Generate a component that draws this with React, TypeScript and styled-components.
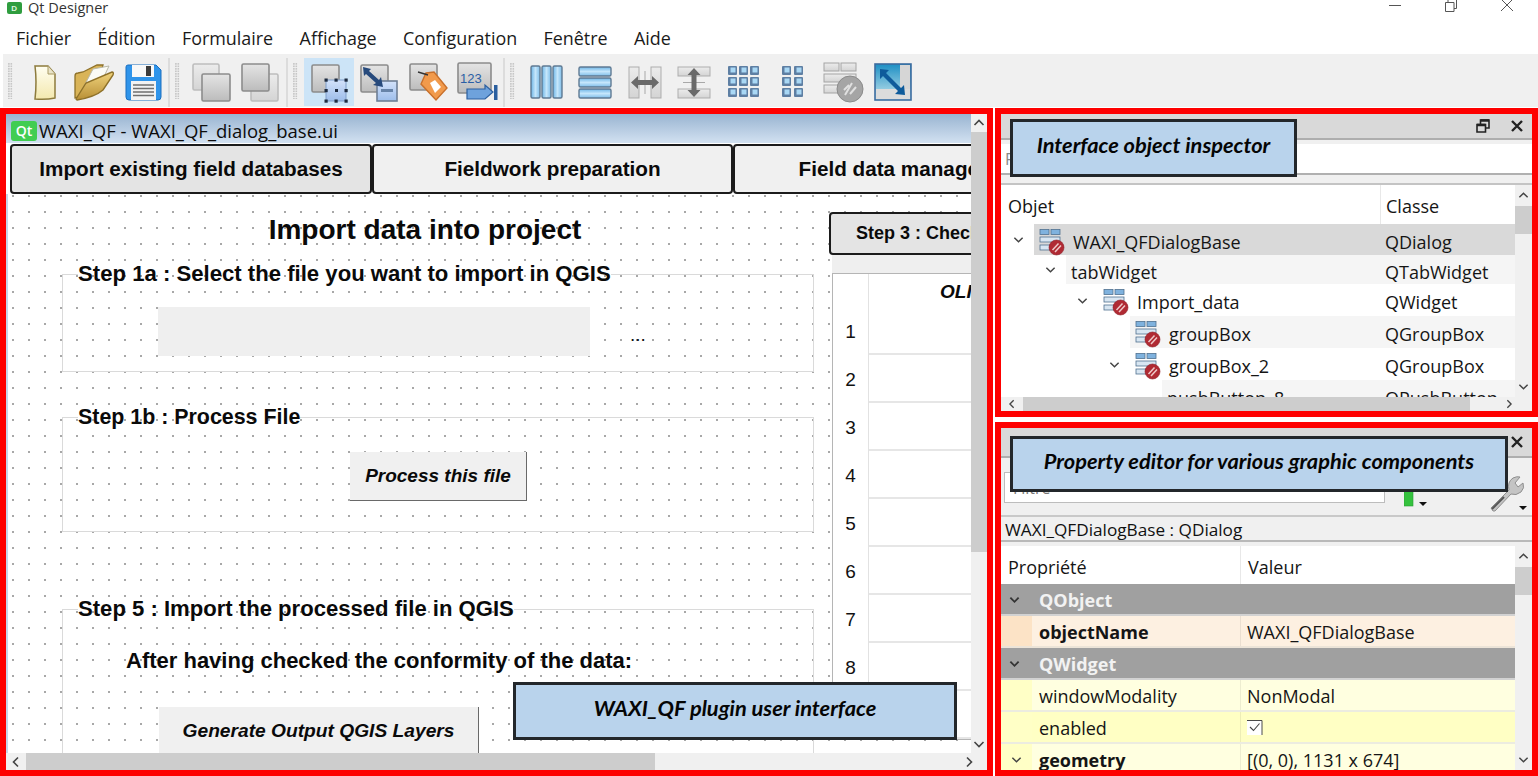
// App.tsx
import React from 'react'
import styled, { createGlobalStyle } from 'styled-components'

const UI_FONT = '"Open Sans", "Noto Sans", sans-serif'
const FORM_FONT = '"Liberation Sans", Arial, sans-serif'

const GlobalStyle = createGlobalStyle`
  html, body { margin:0; padding:0; background:#fff; overflow:hidden; }
  body { font-family:${UI_FONT}; color:#111; }
  * { box-sizing:border-box; }
`

const Page = styled.div`
  width:1538px;
  height:776px;
  display:flex;
  flex-direction:column;
  overflow:hidden;
  background:#fff;
`

/* ---------- window chrome ---------- */

const TitleBar = styled.div`
  height:18px;
  display:flex;
  align-items:center;
  padding:0 0 3px 7px;
  font-size:14.5px;
  line-height:15px;
  color:#333;
`

const TitleText = styled.span`
  margin-left:6px;
`

const WindowButtons = styled.div`
  margin-left:auto;
  height:18px;
  display:flex;
  padding-right:24px;
  gap:42px;
  align-items:flex-start;
`

const MenuBar = styled.div`
  height:36px;
  display:flex;
  align-items:center;
  gap:26.4px;
  padding:3px 0 0 16px;
  font-size:17.9px;
  color:#1a1a1a;
`

const Toolbar = styled.div`
  height:53px;
  margin-left:3px;
  background:#f0f0f0;
  display:flex;
  padding-top:4px;
`

const ToolGroup = styled.div<{ $width: number }>`
  width:${p => p.$width}px;
  display:flex;
  height:49px;
  position:relative;
  border-right:2px solid #dcdcdc;
`

const Grip = styled.div`
  width:5px;
  height:36px;
  margin:5px 6px 0 5px;
  background-image:radial-gradient(circle at 1px 1px, #c6c6c6 .8px, transparent 1px);
  background-size:2.5px 2.5px;
`

const ToolSlot = styled.div<{ $active?: boolean }>`
  width:49.5px;
  height:48px;
  display:flex;
  align-items:center;
  justify-content:center;
  background:${p => (p.$active ? '#cce4f7' : 'transparent')};
`

/* ---------- red framed panels ---------- */

const Panels = styled.div`
  margin-top:1px;
  height:668px;
  display:flex;
  gap:2px;
`

const RightColumn = styled.div`
  width:543px;
  display:flex;
  flex-direction:column;
  gap:5px;
`

const RedFrame = styled.div<{ $width?: number; $height: number }>`
  position:relative;
  width:${p => (p.$width ? `${p.$width}px` : '100%')};
  height:${p => p.$height}px;
  border:6px solid #fe0000;
  display:flex;
  flex-direction:column;
  overflow:hidden;
  background:#f0f0f0;
`

const Callout = styled.div<{ $left: number; $top: number; $width: number; $height: number }>`
  position:absolute;
  left:${p => p.$left}px;
  top:${p => p.$top}px;
  width:${p => p.$width}px;
  height:${p => p.$height}px;
  border:3px solid #23272b;
  background:#b9d3ec;
  display:flex;
  align-items:center;
  justify-content:center;
  padding-bottom:7px;
  font-family:Lato, "Open Sans", sans-serif;
  font-weight:700;
  font-style:italic;
  font-size:21.8px;
  color:#050505;
  z-index:5;
`

/* ---------- scrollbars ---------- */

const VScroll = styled.div<{ $width?: number }>`
  width:${p => p.$width ?? 17}px;
  flex-shrink:0;
  background:#f0f0f0;
  display:flex;
  flex-direction:column;
  align-items:center;
`

const HScroll = styled.div<{ $height?: number }>`
  height:${p => p.$height ?? 17}px;
  flex-shrink:0;
  background:#f0f0f0;
  display:flex;
  align-items:center;
`

const ArrowCell = styled.div<{ $length: number; $vertical?: boolean }>`
  flex-shrink:0;
  display:flex;
  align-items:center;
  justify-content:center;
  ${p => (p.$vertical ? `height:${p.$length}px;width:100%;` : `width:${p.$length}px;height:100%;`)}
`

const VThumb = styled.div<{ $length: number }>`
  width:100%;
  height:${p => p.$length}px;
  background:#cdcdcd;
  flex-shrink:0;
`

const HThumb = styled.div<{ $length: number }>`
  height:100%;
  width:${p => p.$length}px;
  background:#cdcdcd;
  flex-shrink:0;
`

const ScrollSpacer = styled.div`
  flex:1;
`

/* ---------- designer form ---------- */

const DesignerTop = styled.div`
  flex:1;
  min-height:0;
  display:flex;
`

const FormWindow = styled.div`
  flex:1;
  min-width:0;
  display:flex;
  flex-direction:column;
  background:#fff;
`

const FormTitle = styled.div`
  height:29px;
  flex-shrink:0;
  background:linear-gradient(#99b4d1, #d2e1f1);
  display:flex;
  align-items:center;
  padding:4px 0 0 5px;
  font-size:18.5px;
  color:#0c0c0c;
`

const QtBadge = styled.span`
  width:26px;
  height:20px;
  border-radius:3px;
  background:#41cd52;
  color:#fff;
  font-size:14px;
  font-weight:600;
  display:flex;
  align-items:center;
  justify-content:center;
  margin-right:2px;
`

const TabRow = styled.div`
  height:51px;
  flex-shrink:0;
  padding-left:4px;
  display:flex;
  overflow:hidden;
  background:#fff;
`

const Tab = styled.div<{ $selected?: boolean; $width: number }>`
  width:${p => p.$width}px;
  flex-shrink:0;
  height:50px;
  margin-top:1px;
  border:2px solid #1b1b1b;
  border-radius:4px;
  background:${p => (p.$selected ? '#e4e4e4' : '#f0f0f0')};
  display:flex;
  align-items:center;
  justify-content:center;
  font-family:${FORM_FONT};
  font-weight:700;
  font-size:20.7px;
  color:#0a0a0a;
  white-space:nowrap;
  overflow:hidden;
`

const Canvas = styled.div`
  flex:1;
  min-height:0;
  display:flex;
  overflow:hidden;
  border-left:2px solid #c6d7ea;
  background-color:#fff;
  background-image:radial-gradient(circle at 1px 1px, #a8a8a8 .8px, transparent 1px);
  background-size:16px 16px;
  background-position:4px 1px;
  font-family:${FORM_FONT};
`

const FormColumn = styled.div`
  width:752px;
  margin-left:54px;
  flex-shrink:0;
  display:flex;
  flex-direction:column;
`

const FormHeading = styled.h1`
  margin:21px 26px 15px 0;
  height:30px;
  line-height:30px;
  text-align:center;
  font-size:28px;
  font-weight:700;
  color:#0a0a0a;
`

const GroupBox = styled.fieldset<{ $height: number; $gapAfter: number }>`
  margin:0 0 ${p => p.$gapAfter}px;
  padding:0;
  min-width:0;
  flex-shrink:0;
  height:${p => p.$height}px;
  border:1px solid #dadada;
`

const GroupTitle = styled.legend<{ $size: number }>`
  margin-left:15px;
  padding:0;
  height:28px;
  line-height:28px;
  font-size:${p => p.$size}px;
  font-weight:700;
  color:#0a0a0a;
  white-space:nowrap;
`

const FileRow = styled.div`
  display:flex;
  margin:19px 0 0 95px;
`

const FileField = styled.div`
  width:432px;
  height:49px;
  background:#efefef;
`

const BrowseDots = styled.span`
  margin-left:40px;
  font-size:19px;
  line-height:49px;
  padding-top:3px;
`

const FormButton = styled.div<{ $left: number; $top: number; $width: number; $height: number; $size: number }>`
  width:${p => p.$width}px;
  height:${p => p.$height}px;
  margin:${p => p.$top}px 0 0 ${p => p.$left}px;
  background:#f0f0f0;
  border-right:1px solid #696969;
  border-bottom:1px solid #696969;
  display:flex;
  align-items:center;
  justify-content:center;
  font-weight:700;
  font-style:italic;
  font-size:${p => p.$size}px;
  color:#0a0a0a;
`

const GroupText = styled.div`
  margin:24px 0 0 63px;
  height:28px;
  line-height:28px;
  font-size:22px;
  font-weight:700;
  color:#0a0a0a;
  white-space:nowrap;
`

const CheckColumn = styled.div`
  width:320px;
  margin-left:15px;
  flex-shrink:0;
  display:flex;
  flex-direction:column;
`

const StepButton = styled.div`
  margin-top:18px;
  height:43px;
  flex-shrink:0;
  border:2px solid #1b1b1b;
  border-radius:4px;
  background:#e4e4e4;
  display:flex;
  align-items:center;
  padding-left:25px;
  font-size:18px;
  font-weight:700;
  color:#0a0a0a;
  white-space:nowrap;
`

const TableGap = styled.div`
  margin-left:3px;
  height:18px;
  flex-shrink:0;
  background:#efefef;
`

const CheckTable = styled.div`
  margin-left:3px;
  flex-shrink:0;
  background:#fff;
  border:1px solid #b5b5b5;
  display:grid;
  grid-template-columns:36px 1fr;
  grid-template-rows:33px;
  grid-auto-rows:48px;
`

const CornerCell = styled.div`
  border-right:1px solid #e2e2e2;
`

const ColumnHead = styled.div`
  padding-left:71px;
  line-height:36px;
  font-size:19px;
  font-weight:700;
  font-style:italic;
  color:#0a0a0a;
`

const RowNumber = styled.div`
  border-right:1px solid #e2e2e2;
  display:flex;
  align-items:center;
  justify-content:center;
  padding-top:1px;
  font-size:19px;
  color:#111;
`

const RowCell = styled.div`
  border-bottom:2px solid #e6e6e6;
`

/* ---------- docks ---------- */

const DockTitle = styled.div<{ $height: number }>`
  height:${p => p.$height}px;
  flex-shrink:0;
  background:#d9d9d9;
  border-bottom:2px solid #aeaeae;
  display:flex;
  align-items:center;
  justify-content:flex-end;
  padding-right:8px;
  gap:20px;
`

const FilterStrip = styled.div`
  height:45px;
  flex-shrink:0;
  padding-top:4px;
  border-bottom:2px solid #c4c4c4;
`

const FilterInput = styled.div`
  height:31px;
  background:#fff;
  border-bottom:2px solid #b0b0b0;
  padding-left:4px;
  font-size:16px;
  color:#888;
  line-height:30px;
`

const TreeArea = styled.div`
  flex:1;
  min-height:0;
  display:flex;
  background:#fff;
`

const TreeBody = styled.div`
  flex:1;
  min-width:0;
  overflow:hidden;
  font-size:18px;
  color:#151515;
`

const TreeHead = styled.div`
  height:39px;
  display:grid;
  grid-template-columns:380px 1fr;
  align-items:center;
`

const HeadCell = styled.div<{ $divider?: boolean; $pad: number }>`
  height:100%;
  display:flex;
  align-items:center;
  padding:3px 0 0 ${p => p.$pad}px;
  ${p => (p.$divider ? 'border-right:1px solid #e8e8e8;' : '')}
`

const TreeRow = styled.div<{ $height: number }>`
  height:${p => p.$height}px;
  display:flex;
`

const Branch = styled.div<{ $width: number }>`
  width:${p => p.$width}px;
  flex-shrink:0;
  display:flex;
  align-items:center;
  justify-content:flex-end;
  padding-right:10px;
`

const TreeCells = styled.div<{ $tone: 'plain' | 'alt' | 'selected' }>`
  flex:1;
  display:flex;
  align-items:center;
  padding-top:4px;
  background:${p => (p.$tone === 'selected' ? '#d9d9d9' : p.$tone === 'alt' ? '#f5f5f5' : '#fff')};
`

const TreeName = styled.div<{ $pad: number; $width: number }>`
  width:${p => p.$width}px;
  flex-shrink:0;
  padding-left:${p => p.$pad}px;
  display:flex;
  align-items:center;
  gap:8px;
  white-space:nowrap;
`

const ClassName = styled.div`
  padding-left:4px;
  white-space:nowrap;
`

const PropTools = styled.div`
  height:59px;
  flex-shrink:0;
  display:flex;
  padding:14px 0 0 3px;
  border-bottom:2px solid #c9c9c9;
`

const PropFilter = styled.div`
  width:381px;
  height:31px;
  background:#fff;
  border:1px solid #bdbdbd;
  padding-left:8px;
  font-size:16px;
  line-height:31px;
  color:#777;
`

const ToolIcons = styled.div`
  flex:1;
  display:flex;
  justify-content:space-between;
  padding:19px 5px 0 19px;
`

const ObjectLabel = styled.div`
  height:25px;
  flex-shrink:0;
  padding-left:4px;
  line-height:26px;
  font-size:17.2px;
  color:#111;
  border-bottom:2px solid #b9b9b9;
  white-space:nowrap;
`

const PropArea = styled.div`
  flex:1;
  min-height:0;
  display:flex;
  margin-top:4px;
  background:#fff;
`

const PropBody = styled.div`
  flex:1;
  min-width:0;
  overflow:hidden;
  font-size:18px;
  color:#151515;
`

const PropHead = styled.div`
  height:38px;
  display:grid;
  grid-template-columns:240px 1fr;
  align-items:center;
`

const SectionRow = styled.div`
  height:32px;
  background:#a0a0a0;
  border-bottom:2px solid #d2d2d2;
  display:flex;
  align-items:center;
  font-weight:700;
  color:#f2f2f2;
`

const SectionChevron = styled.div`
  width:31px;
  display:flex;
  justify-content:center;
  padding-right:4px;
`

const SectionName = styled.span`
  padding:2px 0 0 7px;
`

const PropRow = styled.div<{ $bg: string; $rule: string }>`
  height:32px;
  display:grid;
  grid-template-columns:31px 209px 1fr;
  background:${p => p.$bg};
  border-bottom:2px solid ${p => p.$rule};
`

const PropStripe = styled.div<{ $bg: string }>`
  background:${p => p.$bg};
  display:flex;
  align-items:center;
  justify-content:center;
`

const PropName = styled.div<{ $bold?: boolean }>`
  padding:2px 0 0 7px;
  display:flex;
  align-items:center;
  font-weight:${p => (p.$bold ? 700 : 400)};
  border-right:1px solid rgba(0,0,0,.07);
`

const PropValue = styled.div`
  padding:2px 0 0 6px;
  display:flex;
  align-items:center;
  white-space:nowrap;
`

/* ---------- icons ---------- */

const Chevron = ({ dir = 'down', color = '#444', size = 11, width = 1.6 }: { dir?: 'up' | 'down' | 'left' | 'right'; color?: string; size?: number; width?: number }) => {
  const rot = { down: 0, up: 180, left: 90, right: -90 }[dir]
  return (
    <svg width={size} height={size} viewBox="0 0 12 12" style={{ transform: `rotate(${rot}deg)` }}>
      <path d="M1.5 4 L6 8.5 L10.5 4" fill="none" stroke={color} strokeWidth={width} />
    </svg>
  )
}

const Gradients = () => (
  <svg width="0" height="0" style={{ position: 'absolute' }}>
    <defs>
      <linearGradient id="gPaper" x1="0" y1="0" x2="0" y2="1"><stop offset="0" stopColor="#fffef0" /><stop offset="1" stopColor="#f3e8ae" /></linearGradient>
      <linearGradient id="gFolder" x1="0" y1="0" x2="0" y2="1"><stop offset="0" stopColor="#f0d37c" /><stop offset="1" stopColor="#b88f35" /></linearGradient>
      <linearGradient id="gGrey" x1="0" y1="0" x2="0" y2="1"><stop offset="0" stopColor="#e4e4e4" /><stop offset="1" stopColor="#bcbcbc" /></linearGradient>
      <linearGradient id="gGreyLight" x1="0" y1="0" x2="0" y2="1"><stop offset="0" stopColor="#ececec" /><stop offset="1" stopColor="#d4d4d4" /></linearGradient>
      <linearGradient id="gSky" x1="0" y1="0" x2="1" y2="0"><stop offset="0" stopColor="#6db5e6" /><stop offset=".5" stopColor="#c5e6fb" /><stop offset="1" stopColor="#7dbde9" /></linearGradient>
      <linearGradient id="gSkyV" x1="0" y1="0" x2="0" y2="1"><stop offset="0" stopColor="#6db5e6" /><stop offset=".5" stopColor="#c5e6fb" /><stop offset="1" stopColor="#7dbde9" /></linearGradient>
      <linearGradient id="gPale" x1="0" y1="0" x2="0" y2="1"><stop offset="0" stopColor="#d3e2fa" /><stop offset="1" stopColor="#9dbdea" /></linearGradient>
      <linearGradient id="gTeal" x1="0" y1="0" x2="0" y2="1"><stop offset="0" stopColor="#1d8fc4" /><stop offset="1" stopColor="#c6e6ee" /></linearGradient>
    </defs>
  </svg>
)

const Tool = ({ children }: { children: React.ReactNode }) => (
  <svg width="44" height="44" viewBox="0 0 44 44">{children}</svg>
)

const GreySquare = ({ x, y, s, h, light }: { x: number; y: number; s: number; h?: number; light?: boolean }) => (
  <rect x={x} y={y} width={s} height={h ?? s} rx="1.5" fill={light ? 'url(#gGreyLight)' : 'url(#gGrey)'} stroke={light ? '#bdbdbd' : '#8c8c8c'} strokeWidth="1.6" />
)

const NewIcon = () => (
  <Tool>
    <path d="M13 6 H26 L33 14 V38 Q24 40 13 39 Q15 22 13 6 Z" fill="url(#gPaper)" stroke="#8d7b3d" strokeWidth="1.5" />
    <path d="M26 6 V14 H33" fill="#e9e4c8" stroke="#a99a63" strokeWidth="1" />
  </Tool>
)

const OpenIcon = () => (
  <Tool>
    <path d="M4 38 L4 16 Q4 13 7 13 L12 12 L26 5 L32 5 L30 13 L12 36 Z" fill="#d9b458" stroke="#8e7129" strokeWidth="1.3" />
    <path d="M11 30 L22 9 L38 6 L29 25 Z" fill="#fbfbf6" stroke="#b9b9a8" strokeWidth="1" />
    <path d="M5 39 L15 23 L41 12 Q43 12 42 15 L32 30 Q24 37 6 40 Z" fill="url(#gFolder)" stroke="#8e7129" strokeWidth="1.4" />
  </Tool>
)

const SaveIcon = () => (
  <Tool>
    <path d="M7 5 H35 L40 10 V37 Q40 40 37 40 H8 Q5 40 5 37 V7 Q5 5 7 5 Z" fill="#2f94ea" stroke="#1b6fbf" strokeWidth="1" />
    <rect x="11" y="5" width="22" height="12" fill="#f8f8f8" />
    <rect x="25" y="6" width="5" height="10" fill="#3b3b3b" />
    <rect x="10" y="21" width="25" height="19" fill="#f2f2f2" />
    <path d="M12 25 H33 M12 28.5 H33 M12 32 H33 M12 35.5 H33" stroke="#6f6f6f" strokeWidth="1.6" />
  </Tool>
)

const CopyIcon = () => (
  <Tool>
    <GreySquare x={4} y={4} s={26} light />
    <GreySquare x={13} y={14} s={28} h={27} />
  </Tool>
)

const BackIcon = () => (
  <Tool>
    <GreySquare x={13} y={14} s={27} light />
    <GreySquare x={4} y={4} s={27} />
  </Tool>
)

const WidgetModeIcon = () => (
  <Tool>
    <GreySquare x={5} y={5} s={27} />
    <rect x="19" y="20" width="20" height="21" fill="url(#gPale)" stroke="#7f9dc9" />
    <rect x="28" y="29" width="3" height="3" fill="#1e2c40" />
    {[[17.5, 18.5], [27.5, 18.5], [37.5, 18.5], [17.5, 29], [37.5, 29], [17.5, 39.5], [27.5, 39.5], [37.5, 39.5]].map(([x, y]) => (
      <rect key={`${x}-${y}`} x={x} y={y} width="3.2" height="3.2" fill="#1e2c40" />
    ))}
  </Tool>
)

const SignalIcon = () => (
  <Tool>
    <GreySquare x={5} y={5} s={27} />
    <rect x="21" y="21" width="20" height="20" fill="url(#gPale)" stroke="#6f7f95" strokeWidth="1.6" />
    <rect x="25" y="29" width="12" height="3" fill="#6783a8" />
    <path d="M7 7 L15 9 L13 11 L23 20 L25 17 L27 27 L17 25 L20 23 L10 14 L8 16 Z" fill="#274a7c" />
  </Tool>
)

const BuddyIcon = () => (
  <Tool>
    <GreySquare x={4} y={4} s={27} h={26} />
    <path d="M20 13 L28 12 L41 28 L30 40 L15 24 Z" fill="#f19a4c" stroke="#c8702c" strokeWidth="1.4" />
    <path d="M24 23 L29 20 L35 27 L29 33 Z" fill="#fff" />
    <path d="M12 12 L22 15" stroke="#333" strokeWidth="1.4" />
  </Tool>
)

const TabOrderIcon = () => (
  <Tool>
    <GreySquare x={3} y={3} s={33} h={30} />
    <text x="5" y="23" fontFamily={FORM_FONT} fontSize="13" fill="#2a5ea5">123</text>
    <path d="M12 29 H30 V25 L38 32 L30 39 H12 Z" fill="#6ea2dc" stroke="#2b5f9f" strokeWidth="1.2" />
    <rect x="39" y="25" width="3.5" height="15" fill="#2b5f9f" />
  </Tool>
)

const BarV = ({ x }: { x: number }) => (
  <rect x={x} y="6" width="9" height="32" rx="1.5" fill="url(#gSky)" stroke="#5f7a93" strokeWidth="1.4" />
)

const BarH = ({ y }: { y: number }) => (
  <rect x="6" y={y} width="32" height="9" rx="1.5" fill="url(#gSkyV)" stroke="#5f7a93" strokeWidth="1.4" />
)

const LayoutHIcon = () => (
  <Tool><BarV x={7} /><BarV x={18} /><BarV x={29} /></Tool>
)

const LayoutVIcon = () => (
  <Tool><BarH y={7} /><BarH y={18} /><BarH y={29} /></Tool>
)

const SplitHIcon = () => (
  <Tool>
    <rect x="6" y="7" width="10" height="31" fill="url(#gGreyLight)" stroke="#adadad" />
    <rect x="28" y="7" width="10" height="31" fill="url(#gGreyLight)" stroke="#adadad" />
    <path d="M22 11 V34" stroke="#a8a8a8" />
    <path d="M8 22.5 L15 16 V20 H29 V16 L36 22.5 L29 29 V25 H15 V29 Z" fill="#6a6a6a" />
  </Tool>
)

const SplitVIcon = () => (
  <Tool>
    <rect x="6" y="7" width="32" height="9" fill="url(#gGreyLight)" stroke="#adadad" />
    <rect x="6" y="29" width="32" height="9" fill="url(#gGreyLight)" stroke="#adadad" />
    <path d="M11 22.5 H33" stroke="#a8a8a8" />
    <path d="M22 8 L28.5 15 H24.5 V30 H28.5 L22 37 L15.5 30 H19.5 V15 H15.5 Z" fill="#6a6a6a" />
  </Tool>
)

const GridCells = ({ xs, ys }: { xs: number[]; ys: number[] }) => (
  <Tool>
    {xs.map(x => ys.map(y => (
      <g key={`${x}-${y}`}>
        <rect x={x} y={y} width="9" height="9" rx="1" fill="#5e7fa3" />
        <rect x={x + 2.5} y={y + 1.5} width="5" height="5" fill="#a9d8f5" />
      </g>
    )))}
  </Tool>
)

const BreakIcon = () => (
  <Tool>
    <rect x="3" y="3" width="15" height="8" fill="url(#gGreyLight)" stroke="#a4a4a4" />
    <rect x="20" y="3" width="15" height="8" fill="url(#gGreyLight)" stroke="#a4a4a4" />
    <rect x="3" y="14" width="32" height="8" fill="url(#gGreyLight)" stroke="#a4a4a4" />
    <rect x="3" y="25" width="15" height="8" fill="url(#gGreyLight)" stroke="#a4a4a4" />
    <circle cx="29" cy="29" r="13" fill="#a5a5a5" stroke="#8b8b8b" />
    <path d="M23 30 L28 25 M29 34 L35 27 M31 23 L24 35" stroke="#e0e0e0" strokeWidth="2" fill="none" />
  </Tool>
)

const AdjustIcon = () => (
  <Tool>
    <rect x="5" y="4" width="36" height="36" fill="url(#gTeal)" stroke="#3d6c9f" strokeWidth="1.6" />
    <rect x="30" y="5" width="10" height="34" fill="#d6d6d6" />
    <rect x="6" y="29" width="34" height="10" fill="#dcdcdc" />
    <path d="M10 9 L19 10 L16 13 L31 28 L34 25 L35 35 L25 34 L28 31 L13 16 L10 19 Z" fill="#0e5b9b" />
  </Tool>
)

const WidgetTreeIcon = ({ size = 28 }: { size?: number }) => (
  <svg width={size} height={size} viewBox="0 0 28 28">
    <rect x="3" y="1.5" width="9" height="5" fill="#7fb2de" stroke="#50708f" strokeWidth=".8" />
    <rect x="14" y="1.5" width="9" height="5" fill="#7fb2de" stroke="#50708f" strokeWidth=".8" />
    <rect x="3" y="9" width="20" height="5" fill="#d8e6f2" stroke="#50708f" strokeWidth=".8" />
    <rect x="3" y="17" width="10" height="5" fill="#d8e6f2" stroke="#50708f" strokeWidth=".8" />
    <circle cx="19.5" cy="19.5" r="7.5" fill="#b02a33" stroke="#8e2028" strokeWidth=".6" />
    <path d="M15.5 22 L21.5 15.5 M18 24 L24 17.5" stroke="#eec8c8" strokeWidth="1.5" />
  </svg>
)

const DesignerLogo = () => (
  <svg width="15" height="12" viewBox="0 0 15 12">
    <rect width="15" height="12" rx="2" fill="#2f9d3f" />
    <text x="4.2" y="9.3" fontSize="8" fontWeight="700" fontFamily={FORM_FONT} fill="#dff5df">D</text>
  </svg>
)

const MinimizeGlyph = () => (
  <svg width="14" height="14" viewBox="0 0 14 14"><path d="M1 6.5 H13" stroke="#555" strokeWidth="1" /></svg>
)

const RestoreGlyph = () => (
  <svg width="14" height="14" viewBox="0 0 14 14" fill="none" stroke="#555" strokeWidth="1">
    <path d="M1.5 3.5 H10 V12.5 H1.5 Z M4 3.5 V.5 H12.5 V9.5 H10" />
  </svg>
)

const CloseGlyph = () => (
  <svg width="14" height="14" viewBox="0 0 14 14"><path d="M1 0 L13 12 M13 0 L1 12" stroke="#555" strokeWidth="1" /></svg>
)

const DockFloat = () => (
  <svg width="14" height="14" viewBox="0 0 14 14" fill="none" stroke="#222" strokeWidth="1.6">
    <path d="M1 5.5 H9.5 V13 H1 Z M4.5 5 V1 H13 V9 H10" />
    <path d="M1 6 H9.5 M4.5 1.5 H13" strokeWidth="2.4" />
  </svg>
)

const DockClose = () => (
  <svg width="14" height="14" viewBox="0 0 14 14"><path d="M2 2 L12 12 M12 2 L2 12" stroke="#222" strokeWidth="2.4" /></svg>
)

const SlotIndicator = () => (
  <svg width="24" height="20" viewBox="0 0 24 20">
    <rect x="0" y="0" width="9" height="15" fill="#35c23e" stroke="#2b9a33" strokeWidth=".6" />
    <path d="M15 11 H23 L19 15 Z" fill="#111" />
  </svg>
)

const WrenchIcon = () => (
  <svg width="38" height="38" viewBox="0 0 38 38" style={{ marginTop: -16 }}>
    <path d="M4 36 L2 33 L20 15 Q18 7 24 3 Q28 1 31 2 L26 8 L29 12 L34 8 Q36 13 32 17 Q27 21 22 19 L6 36 Z" fill="#c4c4c4" stroke="#8f8f8f" />
    <path d="M3 34 L15 22" stroke="#555" strokeWidth="2" />
    <path d="M30 31 H38 L34 35 Z" fill="#111" />
  </svg>
)

const CheckedBox = () => (
  <svg width="16" height="16" viewBox="0 0 16 16">
    <rect x="0" y="0" width="15" height="15" fill="#fff" />
    <path d="M0 .5 H15 V15" fill="none" stroke="#4a4a4a" />
    <path d="M3 7 L6.5 10.5 L12.5 3.5" fill="none" stroke="#444" strokeWidth="1.1" />
  </svg>
)

/* ---------- data ---------- */

const MENUS = ['Fichier', 'Édition', 'Formulaire', 'Affichage', 'Configuration', 'Fenêtre', 'Aide']

const TREE = [
  { name: 'WAXI_QFDialogBase', cls: 'QDialog', indent: 33, chevron: true, icon: true, tone: 'selected', height: 31, pad: 3 },
  { name: 'tabWidget', cls: 'QTabWidget', indent: 65, chevron: true, icon: false, tone: 'alt', height: 29, pad: 5 },
  { name: 'Import_data', cls: 'QWidget', indent: 97, chevron: true, icon: true, tone: 'plain', height: 32, pad: 3 },
  { name: 'groupBox', cls: 'QGroupBox', indent: 129, chevron: false, icon: true, tone: 'alt', height: 32, pad: 3 },
  { name: 'groupBox_2', cls: 'QGroupBox', indent: 129, chevron: true, icon: true, tone: 'plain', height: 32, pad: 3 },
  { name: 'pushButton_8', cls: 'QPushButton', indent: 161, chevron: false, icon: false, tone: 'alt', height: 32, pad: 5 },
] as const

const ROWS = [1, 2, 3, 4, 5, 6, 7, 8, 9]

export default function App() {
  return (
    <Page>
      <GlobalStyle />
      <Gradients />

      <TitleBar>
        <DesignerLogo />
        <TitleText>Qt Designer</TitleText>
        <WindowButtons>
          <MinimizeGlyph />
          <RestoreGlyph />
          <CloseGlyph />
        </WindowButtons>
      </TitleBar>

      <MenuBar>
        {MENUS.map(m => <span key={m}>{m}</span>)}
      </MenuBar>

      <Toolbar>
        <ToolGroup $width={167}>
          <Grip />
          <ToolSlot><NewIcon /></ToolSlot>
          <ToolSlot><OpenIcon /></ToolSlot>
          <ToolSlot><SaveIcon /></ToolSlot>
        </ToolGroup>
        <ToolGroup $width={118}>
          <Grip />
          <ToolSlot><CopyIcon /></ToolSlot>
          <ToolSlot><BackIcon /></ToolSlot>
        </ToolGroup>
        <ToolGroup $width={217}>
          <Grip />
          <ToolSlot $active><WidgetModeIcon /></ToolSlot>
          <ToolSlot><SignalIcon /></ToolSlot>
          <ToolSlot><BuddyIcon /></ToolSlot>
          <ToolSlot><TabOrderIcon /></ToolSlot>
        </ToolGroup>
        <Grip />
        <ToolSlot><LayoutHIcon /></ToolSlot>
        <ToolSlot><LayoutVIcon /></ToolSlot>
        <ToolSlot><SplitHIcon /></ToolSlot>
        <ToolSlot><SplitVIcon /></ToolSlot>
        <ToolSlot><GridCells xs={[6, 17, 28]} ys={[6, 17, 28]} /></ToolSlot>
        <ToolSlot><GridCells xs={[11, 23]} ys={[6, 17, 28]} /></ToolSlot>
        <ToolSlot><BreakIcon /></ToolSlot>
        <ToolSlot><AdjustIcon /></ToolSlot>
      </Toolbar>

      <Panels>
        <RedFrame $width={993} $height={668}>
          <DesignerTop>
            <FormWindow>
              <FormTitle>
                <QtBadge>Qt</QtBadge>
                WAXI_QF - WAXI_QF_dialog_base.ui
              </FormTitle>
              <TabRow>
                <Tab $selected $width={362}>Import existing field databases</Tab>
                <Tab $width={361}>Fieldwork preparation</Tab>
                <Tab $width={361}>Field data management</Tab>
              </TabRow>
              <Canvas>
                <FormColumn>
                  <FormHeading>Import data into project</FormHeading>
                  <GroupBox $height={112} $gapAfter={31}>
                    <GroupTitle $size={22.15}>Step 1a : Select the file you want to import in QGIS</GroupTitle>
                    <FileRow>
                      <FileField />
                      <BrowseDots>...</BrowseDots>
                    </FileRow>
                  </GroupBox>
                  <GroupBox $height={129} $gapAfter={63}>
                    <GroupTitle $size={21.4}>Step 1b : Process File</GroupTitle>
                    <FormButton $left={287} $top={21} $width={177} $height={49} $size={19}>Process this file</FormButton>
                  </GroupBox>
                  <GroupBox $height={300} $gapAfter={0}>
                    <GroupTitle $size={22.1}>Step 5 : Import the processed file in QGIS</GroupTitle>
                    <GroupText>After having checked the conformity of the data:</GroupText>
                    <FormButton $left={96} $top={32} $width={320} $height={49} $size={19.2}>Generate Output QGIS Layers</FormButton>
                  </GroupBox>
                </FormColumn>
                <CheckColumn>
                  <StepButton>Step 3 : Check</StepButton>
                  <TableGap />
                  <CheckTable>
                    <CornerCell />
                    <ColumnHead>OLI</ColumnHead>
                    {ROWS.map(n => (
                      <React.Fragment key={n}>
                        <RowNumber>{n}</RowNumber>
                        <RowCell />
                      </React.Fragment>
                    ))}
                  </CheckTable>
                </CheckColumn>
              </Canvas>
            </FormWindow>
            <VScroll $width={16}>
              <ArrowCell $vertical $length={18}><Chevron dir="up" size={12} /></ArrowCell>
              <VThumb $length={420} />
              <ScrollSpacer />
              <ArrowCell $vertical $length={18}><Chevron size={12} /></ArrowCell>
            </VScroll>
          </DesignerTop>
          <HScroll>
            <ArrowCell $length={20}><Chevron dir="left" size={12} /></ArrowCell>
            <HThumb $length={629} />
            <ScrollSpacer />
            <ArrowCell $length={37}><Chevron dir="right" size={12} /></ArrowCell>
          </HScroll>
          <Callout $left={507} $top={568} $width={444} $height={58}>WAXI_QF plugin user interface</Callout>
        </RedFrame>

        <RightColumn>
          <RedFrame $height={309}>
            <DockTitle $height={26}>
              <DockFloat />
              <DockClose />
            </DockTitle>
            <FilterStrip>
              <FilterInput>F</FilterInput>
            </FilterStrip>
            <TreeArea>
              <TreeBody>
                <TreeHead>
                  <HeadCell $divider $pad={7}>Objet</HeadCell>
                  <HeadCell $pad={5}>Classe</HeadCell>
                </TreeHead>
                {TREE.map(r => (
                  <TreeRow key={r.name} $height={r.height}>
                    <Branch $width={r.indent}>{r.chevron && <Chevron />}</Branch>
                    <TreeCells $tone={r.tone}>
                      <TreeName $pad={r.pad} $width={380 - r.indent}>
                        {r.icon && <WidgetTreeIcon />}
                        <span>{r.name}</span>
                      </TreeName>
                      <ClassName>{r.cls}</ClassName>
                    </TreeCells>
                  </TreeRow>
                ))}
              </TreeBody>
              <VScroll>
                <ArrowCell $vertical $length={21}><Chevron dir="up" /></ArrowCell>
                <VThumb $length={28} />
                <ScrollSpacer />
                <ArrowCell $vertical $length={22}><Chevron /></ArrowCell>
              </VScroll>
            </TreeArea>
            <HScroll $height={14}>
              <ArrowCell $length={22}><Chevron dir="left" size={10} /></ArrowCell>
              <HThumb $length={447} />
              <ScrollSpacer />
              <ArrowCell $length={46}><Chevron dir="right" size={10} /></ArrowCell>
            </HScroll>
            <Callout $left={9} $top={5} $width={287} $height={58}>Interface object inspector</Callout>
          </RedFrame>

          <RedFrame $height={354}>
            <DockTitle $height={30}>
              <DockClose />
            </DockTitle>
            <PropTools>
              <PropFilter>Filtre</PropFilter>
              <ToolIcons>
                <SlotIndicator />
                <WrenchIcon />
              </ToolIcons>
            </PropTools>
            <ObjectLabel>WAXI_QFDialogBase : QDialog</ObjectLabel>
            <PropArea>
              <PropBody>
                <PropHead>
                  <HeadCell $divider $pad={7}>Propriété</HeadCell>
                  <HeadCell $pad={7}>Valeur</HeadCell>
                </PropHead>
                <SectionRow>
                  <SectionChevron><Chevron color="#333" size={11} width={2} /></SectionChevron>
                  <SectionName>QObject</SectionName>
                </SectionRow>
                <PropRow $bg="#fdf0e1" $rule="#ece4d8">
                  <PropStripe $bg="#fce3c6" />
                  <PropName $bold>objectName</PropName>
                  <PropValue>WAXI_QFDialogBase</PropValue>
                </PropRow>
                <SectionRow>
                  <SectionChevron><Chevron color="#333" size={11} width={2} /></SectionChevron>
                  <SectionName>QWidget</SectionName>
                </SectionRow>
                <PropRow $bg="#ffffe0" $rule="#ecece0">
                  <PropStripe $bg="#ffffc6" />
                  <PropName>windowModality</PropName>
                  <PropValue>NonModal</PropValue>
                </PropRow>
                <PropRow $bg="#ffffc4" $rule="#ecece0">
                  <PropStripe $bg="#ffffc6" />
                  <PropName>enabled</PropName>
                  <PropValue><CheckedBox /></PropValue>
                </PropRow>
                <PropRow $bg="#ffffe0" $rule="#ecece0">
                  <PropStripe $bg="#ffffc6"><Chevron /></PropStripe>
                  <PropName $bold>geometry</PropName>
                  <PropValue>[(0, 0), 1131 x 674]</PropValue>
                </PropRow>
              </PropBody>
              <VScroll>
                <ArrowCell $vertical $length={21}><Chevron dir="up" /></ArrowCell>
                <VThumb $length={28} />
                <ScrollSpacer />
                <ArrowCell $vertical $length={22}><Chevron /></ArrowCell>
              </VScroll>
            </PropArea>
            <Callout $left={9} $top={8} $width={498} $height={56}>Property editor for various graphic components</Callout>
          </RedFrame>
        </RightColumn>
      </Panels>
    </Page>
  )
}
